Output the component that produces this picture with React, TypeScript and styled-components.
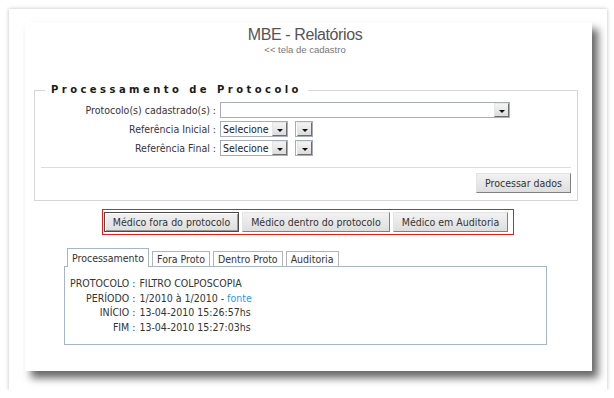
import React from 'react'
import styled, { createGlobalStyle } from 'styled-components'

const GlobalStyle = createGlobalStyle`
	html,
	body {
		margin: 0;
		padding: 0;
		background: #ffffff;
	}

	body {
		font-family: 'DejaVu Sans Condensed', 'DejaVu Sans', sans-serif;
		font-size: 10.5px;
		color: #333333;
	}
`

const uiFont = `'DejaVu Sans Condensed', 'DejaVu Sans', sans-serif`

const Frame = styled.div`
	box-sizing: border-box;
	width: 598px;
	height: 381px;
	margin: 9px 0 0 9px;
	padding: 13px 15px 0 16px;
	background: #ffffff;
	box-shadow: 0 0 4px rgba(0, 0, 0, 0.25);
`

const Page = styled.div`
	box-sizing: border-box;
	display: flex;
	flex-direction: column;
	width: 567px;
	height: 349px;
	padding: 4px 14px 0 9px;
	background: #ffffff;
	box-shadow: 6px 7px 8px rgba(0, 0, 0, 0.6);
`

const Header = styled.header`
	display: flex;
	flex-direction: column;
	align-items: center;
	padding-right: 2px;
`

const Title = styled.h1`
	margin: 0;
	font-family: 'Liberation Sans', Arial, sans-serif;
	font-size: 16px;
	line-height: 18px;
	font-weight: normal;
	letter-spacing: -0.4px;
	color: #555555;
`

const BackLink = styled.a`
	font-family: 'Liberation Sans', Arial, sans-serif;
	font-size: 9.5px;
	line-height: 11px;
	color: #777777;
	text-decoration: none;
`

const Fieldset = styled.fieldset`
	margin: 28px 0 0 0;
	padding: 5px 6px 7px 6px;
	border: 1px solid #d6d6d6;
	min-width: 0;
`

const Legend = styled.legend`
	margin-left: 4px;
	padding: 0 6px;
	font-family: 'DejaVu Sans', sans-serif;
	font-size: 10px;
	line-height: 14px;
	font-weight: bold;
	letter-spacing: 3.45px;
	color: #1a1a1a;
`

const FormGrid = styled.div`
	display: grid;
	grid-template-columns: 175px 1fr;
	column-gap: 4px;
	row-gap: 3px;
`

const Label = styled.label`
	text-align: right;
	line-height: 16px;
	white-space: nowrap;
	color: #3a3340;
`

const Controls = styled.div`
	display: flex;
	gap: 7px;
	align-items: center;
`

const Select = styled.div<{ width: number }>`
	box-sizing: border-box;
	display: flex;
	align-items: stretch;
	width: ${({ width }) => width}px;
	height: 16px;
	border: 1px solid #a9aeb6;
	background: #ffffff;
`

const SelectValue = styled.span`
	flex: 1;
	padding-left: 2px;
	line-height: 14px;
	color: #222222;
	overflow: hidden;
	white-space: nowrap;
`

const Arrow = styled.span`
	box-sizing: border-box;
	display: flex;
	align-items: center;
	justify-content: center;
	width: 15px;
	margin: 0 0 0 auto;
	background: linear-gradient(#f4f4f4, #dcdcdc);
	border: 1px solid;
	border-color: #e6e6e6 #6e6e6e #6e6e6e #e6e6e6;

	&::after {
		content: '';
		border-left: 3px solid transparent;
		border-right: 3px solid transparent;
		border-top: 3px solid #111111;
		margin-top: 2px;
	}
`

const Divider = styled.hr`
	margin: 11px 0 5px 0;
	border: none;
	border-top: 1px solid #dddddd;
`

const Actions = styled.div`
	display: flex;
	justify-content: flex-end;
`

const Button = styled.button<{ focused?: boolean }>`
	box-sizing: border-box;
	height: 20px;
	padding: 0 8px;
	font-family: ${uiFont};
	font-size: 10.5px;
	color: #333333;
	background: linear-gradient(#f2f2f2, #dedede);
	border: 1px solid;
	border-color: ${({ focused }) =>
		focused ? '#4a4a4a' : '#e4e4e4 #808080 #808080 #e4e4e4'};
	box-shadow: ${({ focused }) =>
		focused ? 'inset 1px 1px 0 #ffffff, inset -1px -1px 0 #9a9a9a' : 'none'};
	cursor: pointer;
`

const ButtonGroup = styled.div`
	align-self: center;
	display: flex;
	gap: 3px;
	margin: 8px 0 0 4px;
	padding: 2px 5px 2px 1px;
	border: 1px solid #e02020;
`

const Tabs = styled.div`
	display: flex;
	flex-direction: column;
	margin: 13px 0 0 30px;
	width: 483px;
`

const TabList = styled.div`
	display: flex;
	align-items: flex-end;
	gap: 3px;
	padding-left: 3px;
`

const Tab = styled.div<{ active?: boolean }>`
	box-sizing: border-box;
	height: ${({ active }) => (active ? 19 : 15)}px;
	padding: ${({ active }) => (active ? '3px 4px 0' : '1px 4px 0')};
	line-height: 13px;
	background: #ffffff;
	border: 1px solid ${({ active }) => (active ? '#a6b6c6' : '#b4b4b4')};
	border-bottom: none;
	margin-bottom: ${({ active }) => (active ? -1 : 0)}px;
	position: relative;
	color: #333333;
`

const TabPanel = styled.div`
	box-sizing: border-box;
	height: 79px;
	padding: 9px 5px 0;
	border: 1px solid #a6b6c6;
`

const InfoGrid = styled.div`
	display: grid;
	grid-template-columns: auto 1fr;
	column-gap: 4px;
	line-height: 14.5px;
`

const InfoLabel = styled.span`
	text-align: right;
	white-space: nowrap;
	color: #333333;
`

const InfoValue = styled.span`
	white-space: nowrap;
	color: #333333;
`

const SourceLink = styled.a`
	color: #3399dd;
	text-decoration: none;
`

const info: [string, React.ReactNode][] = [
	['PROTOCOLO :', 'FILTRO COLPOSCOPIA'],
	[
		'PERÍODO :',
		<>
			1/2010 à 1/2010 - <SourceLink href="#">fonte</SourceLink>
		</>,
	],
	['INÍCIO :', '13-04-2010 15:26:57hs'],
	['FIM :', '13-04-2010 15:27:03hs'],
]

function App() {
	return (
		<>
			<GlobalStyle />
			<Frame>
				<Page>
					<Header>
						<Title>MBE - Relatórios</Title>
						<BackLink href="#">&lt;&lt; tela de cadastro</BackLink>
					</Header>

					<Fieldset>
						<Legend>Processamento de Protocolo</Legend>
						<FormGrid>
							<Label>Protocolo(s) cadastrado(s) :</Label>
							<Controls>
								<Select width={290}>
									<SelectValue />
									<Arrow />
								</Select>
							</Controls>

							<Label>Referência Inicial :</Label>
							<Controls>
								<Select width={68}>
									<SelectValue>Selecione</SelectValue>
									<Arrow />
								</Select>
								<Select width={18}>
									<Arrow />
								</Select>
							</Controls>

							<Label>Referência Final :</Label>
							<Controls>
								<Select width={68}>
									<SelectValue>Selecione</SelectValue>
									<Arrow />
								</Select>
								<Select width={18}>
									<Arrow />
								</Select>
							</Controls>
						</FormGrid>
						<Divider />
						<Actions>
							<Button>Processar dados</Button>
						</Actions>
					</Fieldset>

					<ButtonGroup>
						<Button focused>Médico fora do protocolo</Button>
						<Button>Médico dentro do protocolo</Button>
						<Button>Médico em Auditoria</Button>
					</ButtonGroup>

					<Tabs>
						<TabList>
							<Tab active>Processamento</Tab>
							<Tab>Fora Proto</Tab>
							<Tab>Dentro Proto</Tab>
							<Tab>Auditoria</Tab>
						</TabList>
						<TabPanel>
							<InfoGrid>
								{info.map(([label, value]) => (
									<React.Fragment key={label}>
										<InfoLabel>{label}</InfoLabel>
										<InfoValue>{value}</InfoValue>
									</React.Fragment>
								))}
							</InfoGrid>
						</TabPanel>
					</Tabs>
				</Page>
			</Frame>
		</>
	)
}

export default App
